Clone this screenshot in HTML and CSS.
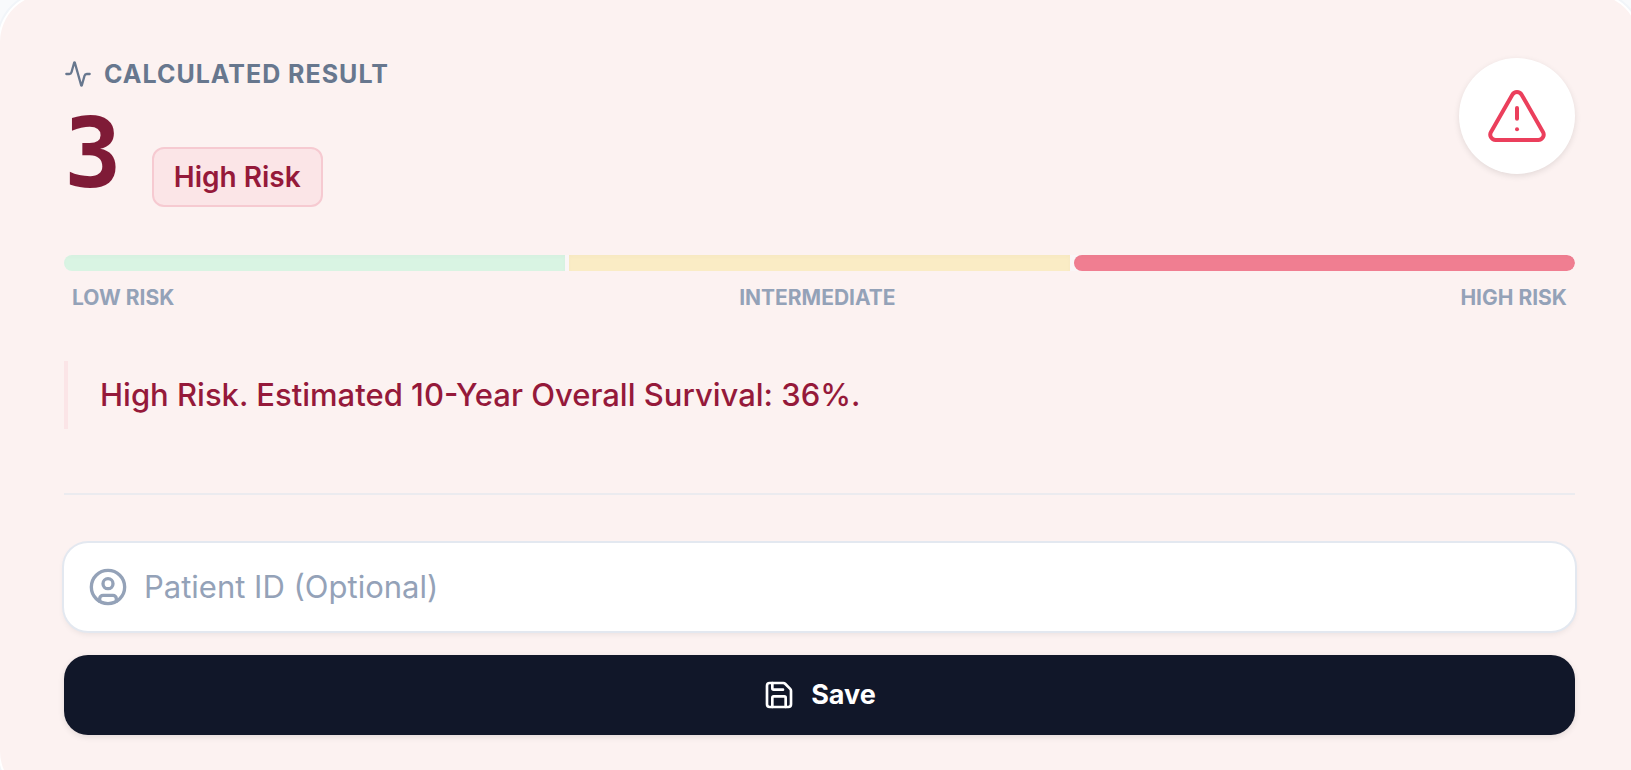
FILE: index.html
```html
<!DOCTYPE html>
<html lang="en">
<head>
  <meta charset="UTF-8">
  <title>Calculated Result</title>
  <meta name="viewport" content="width=device-width, initial-scale=1.0">
  <link rel="stylesheet" href="styles.css">
</head>
<body>

  <main class="result-card">

    <!-- Score -->
    <header class="result-header">
      <div class="result-summary">
        <h2 class="result-title">
          <svg class="icon-activity" viewBox="0 0 24 24" aria-hidden="true">
            <path d="M22 12h-2.48a2 2 0 0 0-1.93 1.46l-2.35 8.36a.25.25 0 0 1-.48 0L9.24 2.18a.25.25 0 0 0-.48 0l-2.35 8.36A2 2 0 0 1 4.49 12H2"/>
          </svg>
          CALCULATED RESULT
        </h2>
        <div class="score-row">
          <span class="score">3</span>
          <span class="badge">High Risk</span>
        </div>
      </div>
      <div class="alert-circle">
        <svg class="icon-alert" viewBox="0 0 24 24" aria-hidden="true">
          <path d="m21.73 18-8-14a2 2 0 0 0-3.48 0l-8 14A2 2 0 0 0 4 21h16a2 2 0 0 0 1.73-3"/>
          <path d="M12 9v4"/>
          <path d="M12 17h.01"/>
        </svg>
      </div>
    </header>

    <!-- Risk scale -->
    <section class="risk-scale">
      <div class="risk-bar">
        <div class="segment low"></div>
        <div class="segment intermediate"></div>
        <div class="segment high"></div>
      </div>
      <div class="risk-labels">
        <span>LOW RISK</span>
        <span>INTERMEDIATE</span>
        <span>HIGH RISK</span>
      </div>
    </section>

    <p class="interpretation">High Risk. Estimated 10-Year Overall Survival: 36%.</p>

    <!-- Save form -->
    <form class="save-form">
      <label class="patient-field" for="patient-id">
        <svg class="icon-user" viewBox="0 0 24 24" aria-hidden="true">
          <circle cx="12" cy="12" r="10"/>
          <circle cx="12" cy="10" r="3"/>
          <path d="M7 20.662V19a2 2 0 0 1 2-2h6a2 2 0 0 1 2 2v1.662"/>
        </svg>
        <input type="text" id="patient-id" placeholder="Patient ID (Optional)" aria-label="Patient ID">
      </label>
      <button type="button" class="save-button">
        <svg class="icon-save" viewBox="0 0 24 24" aria-hidden="true">
          <path d="M15.2 3a2 2 0 0 1 1.4.6l3.8 3.8a2 2 0 0 1 .6 1.4V19a2 2 0 0 1-2 2H5a2 2 0 0 1-2-2V5a2 2 0 0 1 2-2z"/>
          <path d="M17 21v-7a1 1 0 0 0-1-1H8a1 1 0 0 0-1 1v7"/>
          <path d="M7 3v4a1 1 0 0 0 1 1h7"/>
        </svg>
        Save
      </button>
    </form>

  </main>

</body>
</html>
```
FILE: styles.css
```css
* { box-sizing: border-box; }

body {
  height: 100vh;
  margin: 0;
  overflow: hidden;
  background-color: #f8fafc;
  font-family: Inter, "Liberation Sans", sans-serif;
}

svg {
  flex: none;
  fill: none;
  stroke: currentColor;
  stroke-width: 2;
  stroke-linecap: round;
  stroke-linejoin: round;
}

/* Card */
.result-card {
  margin: -6px -8px 0 0;
  padding: 64px;
  background-color: #fcf2f1;
  border-radius: 48px;
  box-shadow: 0 0 0 2px #fff, 0 0 0 4px #f1f5f9;
}

.result-header {
  display: flex;
  justify-content: space-between;
  align-items: flex-start;
}

.result-title {
  display: flex;
  align-items: center;
  gap: 12px;
  margin: 0 0 16px;
  font-size: 25px;
  line-height: 32px;
  font-weight: 700;
  letter-spacing: 1px;
  color: #67778e;
}

.icon-activity { width: 28px; height: 28px; }

.score-row {
  display: flex;
  align-items: baseline;
  gap: 30px;
}

.score {
  font-family: "DejaVu Sans Mono", monospace;
  font-size: 96px;
  line-height: 96px;
  font-weight: 700;
  color: #7f1b37;
}

.badge {
  padding: 8px 20px;
  border: 2px solid #f6cad1;
  border-radius: 12px;
  background-color: #fbe5e7;
  font-size: 28px;
  line-height: 40px;
  font-weight: 600;
  color: #95193a;
}

.alert-circle {
  display: flex;
  align-items: center;
  justify-content: center;
  width: 116px;
  height: 116px;
  border-radius: 50%;
  background-color: #fff;
  box-shadow: 0 2px 6px rgba(0,0,0,0.1);
  color: #eb3f5c;
}

.icon-alert { width: 64px; height: 64px; stroke-width: 1.5; }

/* Risk scale */
.risk-scale { margin: 48px 0; }

.risk-bar {
  display: flex;
  gap: 4px;
  height: 16px;
  border-radius: 8px;
  overflow: hidden;
  background-color: #faf6f7;
}

.segment { flex: 1; box-shadow: inset 0 2px 4px rgba(0,0,0,0.02); }
.segment.low { background-color: #d9f4e3; }
.segment.intermediate { background-color: #faecc5; }
.segment.high { background-color: #f07e91; border-radius: 8px; }

.risk-labels {
  display: flex;
  justify-content: space-between;
  margin-top: 12px;
  padding: 0 8px;
  font-size: 21px;
  line-height: 30px;
  font-weight: 700;
  color: #94a2b8;
}

.interpretation {
  margin: 0 0 64px;
  padding: 8px 0 8px 32px;
  border-left: 4px solid #fbe5e7;
  font-size: 31px;
  line-height: 52px;
  font-weight: 500;
  color: #95193a;
}

/* Save form */
.save-form {
  display: flex;
  flex-direction: column;
  gap: 24px;
  padding-top: 48px;
  border-top: 2px solid #ebebef;
}

.patient-field {
  display: flex;
  align-items: center;
  gap: 16px;
  height: 88px;
  padding: 0 24px;
  border-radius: 24px;
  background-color: #fff;
  box-shadow: 0 0 0 2px #e3e8f0, 0 3px 6px rgba(0,0,0,0.08);
  color: #94a2b8;
}

.icon-user { width: 40px; height: 40px; }

.patient-field input {
  flex: 1;
  min-width: 0;
  padding: 0;
  border: none;
  outline: none;
  background: transparent;
  font: 400 31px/48px Inter, "Liberation Sans", sans-serif;
  color: #111729;
}

.patient-field input::placeholder { color: #94a2b8; opacity: 1; }

.save-button {
  display: flex;
  align-items: center;
  justify-content: center;
  gap: 16px;
  height: 80px;
  border: none;
  border-radius: 24px;
  background-color: #111729;
  box-shadow: 0 2px 6px rgba(0,0,0,0.1);
  font: 700 27px/40px Inter, "Liberation Sans", sans-serif;
  color: #fff;
  cursor: pointer;
}

.icon-save { width: 32px; height: 32px; }
```
